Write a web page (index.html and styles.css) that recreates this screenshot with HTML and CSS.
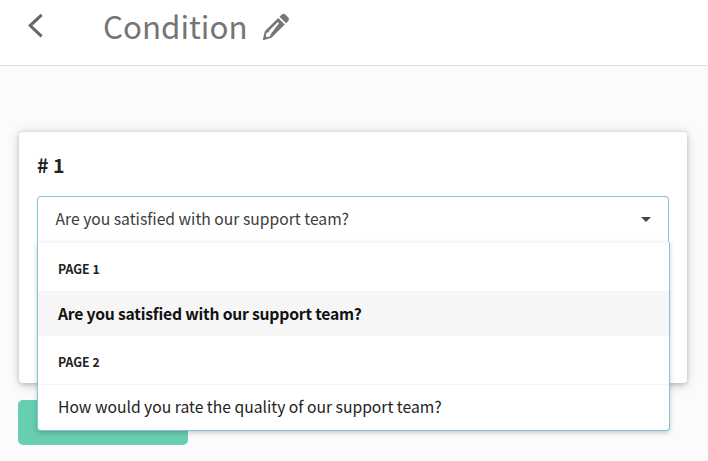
FILE: index.html
```html
<!DOCTYPE html>
<html lang="en">
<head>
	<meta charset="UTF-8">
	<meta name="viewport" content="width=device-width, initial-scale=1">

	<title>Condition</title>

	<link rel="stylesheet" href="styles.css">
</head>
<body>
	<header class="topbar">
		<a class="back" href="#" aria-label="Back">
			<svg width="16" height="26" viewBox="0 0 16 26">
				<path d="M14.6 1.9 L3.2 12.6 L14.6 23.4" fill="none" stroke="#666" stroke-width="3"/>
			</svg>
		</a>
		<h1>Condition</h1>
		<a class="edit" href="#" aria-label="Edit">
			<svg width="28" height="28" viewBox="0 0 28 28">
				<path fill="#757575" fill-rule="evenodd" d="M16.2 4.9 L22.8 11.5 L9.4 24.8 L2 27 Q0.8 27.1 1 26 L2.8 18.3 Z M15.8 8.9 L7.3 17.4 L6.5 19.4 L4.7 19.6 L3.8 23.2 L4.8 24.2 L8.2 23.3 L8.6 21.2 L17 10.2 Z"/>
				<path fill="#757575" d="M17.5 3.7 L19.9 1.4 Q21.6 0.2 23.2 1.4 L26.3 4.5 Q27.6 6.2 26.3 7.9 L24 10.2 Z"/>
			</svg>
		</a>
	</header>

	<main>
		<section class="card">
			<h2># 1</h2>

			<div class="select">
				<div class="selected">
					<span>Are you satisfied with our support team?</span>
					<i class="caret"></i>
				</div>

				<div class="menu">
					<div class="group">PAGE 1</div>
					<div class="option active">Are you satisfied with our support team?</div>
					<div class="group">PAGE 2</div>
					<div class="option">How would you rate the quality of our support team?</div>
				</div>
			</div>
		</section>

		<button class="save" type="button" aria-label="Save"></button>
	</main>
</body>
</html>
```
FILE: styles.css
```css
* {
	box-sizing: border-box;
	margin: 0;
	padding: 0;
}

body {
	height: 461px;
	overflow: hidden;
	background: #fbfbfb;
	color: #222;
	font-family: "Noto Sans CJK SC", "Noto Sans", sans-serif;
	font-size: 15.68px;
}

.topbar {
	display: flex;
	align-items: center;
	height: 66px;
	padding: 0 0 14px 27px;
	background: #fff;
	border-bottom: 1px solid #e0e0e0;
}

.topbar svg {
	display: block;
}

.topbar h1 {
	margin-left: 60px;
	padding-top: 1px;
	color: #757575;
	font-size: 31.3px;
	font-weight: 400;
	line-height: 50px;
}

.edit {
	margin: 2px 0 0 14px;
}

main {
	padding: 65px 21px 0 18px;
}

.card {
	height: 252px;
	margin-left: 1px;
	padding: 19px 18px 0;
	background: #fff;
	border-top: 1px solid #ddd;
	border-radius: 4px;
	box-shadow: 0 2px 4px rgba(0, 0, 0, .16), 0 2px 12px rgba(0, 0, 0, .16);
}

.card h2 {
	font-size: 19.5px;
	font-weight: 700;
	line-height: 28px;
}

.select {
	position: relative;
	margin-top: 17px;
	white-space: nowrap;
}

.selected {
	display: flex;
	align-items: center;
	justify-content: space-between;
	height: 47px;
	padding: 0 17px 2px 17.5px;
	border: 1px solid #85c4d8;
	border-bottom: 0;
	border-radius: 4px 4px 0 0;
	color: #3c3c3c;
}

.selected span {
	padding-bottom: 2px;
}

.caret {
	border: 5px solid transparent;
	border-top-color: #444;
	border-bottom: 0;
}

.menu {
	position: absolute;
	top: 46px;
	left: 0;
	width: 633px;
	height: 189px;
	background: #fff;
	border: 1px solid #85c4d8;
	border-top-color: #fafafa;
	border-radius: 0 0 4px 4px;
	box-shadow: 0 2px 5px rgba(0, 0, 0, .2);
}

.group {
	height: 48px;
	padding-left: 20px;
	font-size: 12.3px;
	font-weight: 700;
	line-height: 52px;
}

.option {
	height: 45px;
	padding-left: 20px;
	border-top: 1px solid #f5f5f5;
	line-height: 43px;
}

.option.active {
	background: #f6f6f6;
	color: #111;
	font-weight: 700;
	letter-spacing: -.2px;
}

.save {
	display: block;
	width: 170px;
	height: 45px;
	margin-top: 17px;
	border: 0;
	border-radius: 5px;
	background: #67ceb0;
}
```
